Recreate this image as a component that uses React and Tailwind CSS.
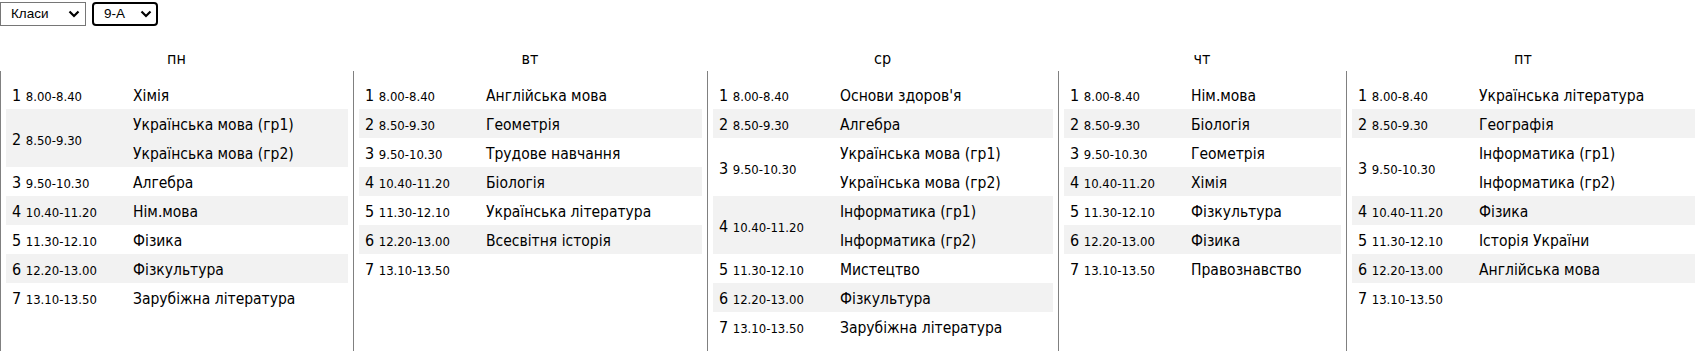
import React from "react";

const times = [
  "8.00-8.40",
  "8.50-9.30",
  "9.50-10.30",
  "10.40-11.20",
  "11.30-12.10",
  "12.20-13.00",
  "13.10-13.50",
];

const days = [
  {
    name: "пн",
    lessons: [
      ["Хімія"],
      ["Українська мова (гр1)", "Українська мова (гр2)"],
      ["Алгебра"],
      ["Нім.мова"],
      ["Фізика"],
      ["Фізкультура"],
      ["Зарубіжна література"],
    ],
  },
  {
    name: "вт",
    lessons: [
      ["Англійська мова"],
      ["Геометрія"],
      ["Трудове навчання"],
      ["Біологія"],
      ["Українська література"],
      ["Всесвітня історія"],
      [""],
    ],
  },
  {
    name: "ср",
    lessons: [
      ["Основи здоров'я"],
      ["Алгебра"],
      ["Українська мова (гр1)", "Українська мова (гр2)"],
      ["Інформатика (гр1)", "Інформатика (гр2)"],
      ["Мистецтво"],
      ["Фізкультура"],
      ["Зарубіжна література"],
    ],
  },
  {
    name: "чт",
    lessons: [
      ["Нім.мова"],
      ["Біологія"],
      ["Геометрія"],
      ["Хімія"],
      ["Фізкультура"],
      ["Фізика"],
      ["Правознавство"],
    ],
  },
  {
    name: "пт",
    lessons: [
      ["Українська література"],
      ["Географія"],
      ["Інформатика (гр1)", "Інформатика (гр2)"],
      ["Фізика"],
      ["Історія України"],
      ["Англійська мова"],
      [""],
    ],
  },
];

const Chevron = () => (
  <svg
    className="absolute right-[6px] top-[9px] pointer-events-none"
    width="12"
    height="8"
    viewBox="0 0 12 8"
    fill="none"
  >
    <path d="M1.5 1.5 L6 6 L10.5 1.5" stroke="#000" strokeWidth="2.2" />
  </svg>
);

const Select = ({ value, options, className }) => (
  <div className="relative">
    <select
      defaultValue={value}
      className={`appearance-none h-6 pl-[10px] text-[13.5px] text-black bg-white ${className}`}
      style={{ fontFamily: '"Liberation Sans", Arial, sans-serif' }}
    >
      {options.map((o) => (
        <option key={o}>{o}</option>
      ))}
    </select>
    <Chevron />
  </div>
);

const App = () => {
  return (
    <div
      className="w-[1700px] bg-white text-black"
      style={{ fontFamily: '"DejaVu Sans Condensed", "DejaVu Sans", sans-serif' }}
    >
      <div className="flex gap-[6px] pt-px">
        <Select
          value="Класи"
          options={["Класи", "Вчителі"]}
          className="w-[86px] border border-[#767676]"
        />
        <Select
          value="9-А"
          options={["9-А", "9-Б"]}
          className="w-[66px] border-2 border-black rounded-[4px] pl-[9px]"
        />
      </div>

      <div className="grid grid-cols-[353px_354px_351px_288px_354px] mt-[17px]">
        {days.map((d) => (
          <div key={d.name} className="h-[28px] flex items-center justify-center pt-[3px] text-[16px]">
            {d.name}
          </div>
        ))}
        {days.map((d) => (
          <div
            key={d.name}
            className="border-l border-[#808080] pl-[5px] pr-[5px] pt-[9px] pb-[11px]"
          >
            {d.lessons.map((subs, i) => (
              <div
                key={i}
                className={`flex items-center ${i % 2 === 1 ? "bg-[#f2f2f2]" : ""}`}
              >
                <div className="w-[127px] shrink-0 pl-[6px] pt-[3px] whitespace-nowrap">
                  <span className="text-[16px]">{i + 1}</span>{" "}
                  <span className="text-[13px]">{times[i]}</span>
                </div>
                <div className="flex-1">
                  {subs.map((s, j) => (
                    <div
                      key={j}
                      className="h-[29px] pt-[3px] flex items-center text-[15.5px] whitespace-nowrap"
                    >
                      {s}
                    </div>
                  ))}
                </div>
              </div>
            ))}
          </div>
        ))}
      </div>
    </div>
  );
};

export default App;
